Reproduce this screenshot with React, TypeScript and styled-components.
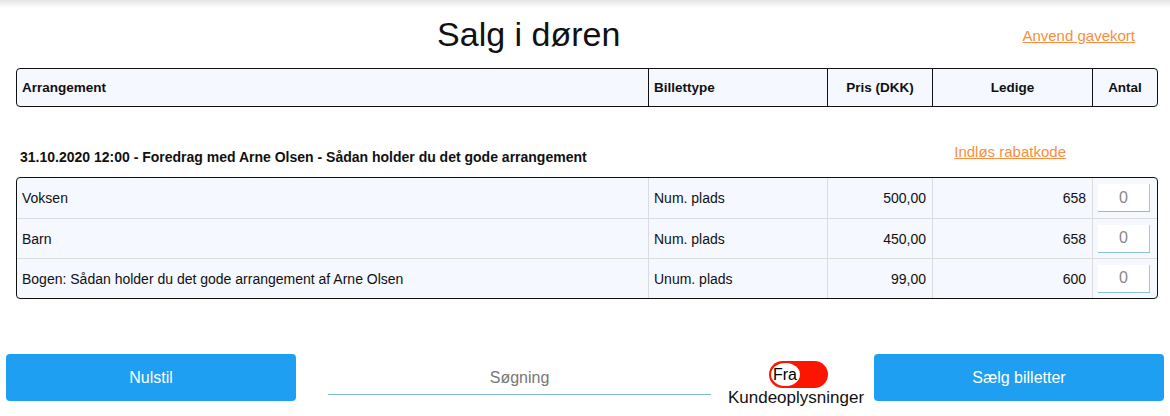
import React from 'react';
import styled, { createGlobalStyle } from 'styled-components';

const GlobalStyle = createGlobalStyle`
    html, body {
        margin: 0;
        padding: 0;
        background: #fff;
        font-family: "Liberation Sans", Arial, sans-serif;
        color: #111;
    }
`;

interface ITicket {
    name: string;
    type: string;
    price: string;
    free: string;
}

const tickets: ITicket[] = [
    { name: 'Voksen', type: 'Num. plads', price: '500,00', free: '658' },
    { name: 'Barn', type: 'Num. plads', price: '450,00', free: '658' },
    { name: 'Bogen: Sådan holder du det gode arrangement af Arne Olsen', type: 'Unum. plads', price: '99,00', free: '600' }
];

const COLUMNS = '631px 179px 105px 160px 1fr';

export default function App(): React.ReactElement {
    return (
        <>
            <GlobalStyle/>
            <Page>
                <TopShade/>
                <TitleRow>
                    <Title>Salg i døren</Title>
                    <OrangeLink href="#">Anvend gavekort</OrangeLink>
                </TitleRow>
                <HeaderTable>
                    <HeadCell>Arrangement</HeadCell>
                    <HeadCell>Billettype</HeadCell>
                    <HeadCell center>Pris (DKK)</HeadCell>
                    <HeadCell center>Ledige</HeadCell>
                    <HeadCell center>Antal</HeadCell>
                </HeaderTable>
                <EventRow>
                    <EventTitle>31.10.2020 12:00 - Foredrag med Arne Olsen - Sådan holder du det gode arrangement</EventTitle>
                    <DiscountLink href="#">Indløs rabatkode</DiscountLink>
                </EventRow>
                <BodyTable>
                    {tickets.map((t, i) => (
                        <BodyRow key={t.name} first={i === 0}>
                            <Cell>{t.name}</Cell>
                            <Cell>{t.type}</Cell>
                            <Cell right>{t.price}</Cell>
                            <Cell right>{t.free}</Cell>
                            <Cell>
                                <AmountInput defaultValue="0"/>
                            </Cell>
                        </BodyRow>
                    ))}
                </BodyTable>
                <BottomBar>
                    <BlueButton>Nulstil</BlueButton>
                    <SearchInput placeholder="Søgning"/>
                    <ToggleGroup>
                        <TogglePill>
                            <ToggleKnob>Fra</ToggleKnob>
                        </TogglePill>
                        <ToggleLabel>Kundeoplysninger</ToggleLabel>
                    </ToggleGroup>
                    <BlueButton>Sælg billetter</BlueButton>
                </BottomBar>
            </Page>
        </>
    );
}

const Page = styled.div`
    width: 1170px;
    height: 416px;
    overflow: hidden;
`;

const TopShade = styled.div`
    height: 8px;
    background: linear-gradient(#e4e4e4, #ffffff);
`;

const TitleRow = styled.div`
    display: flex;
    align-items: flex-start;
    height: 60px;
    padding: 7px 35px 0 16px;
    box-sizing: border-box;
`;

const Title = styled.h1`
    flex: 1;
    margin: 0 0 0 19px;
    font-size: 34px;
    line-height: 39px;
    font-weight: normal;
    text-align: center;
`;

const OrangeLink = styled.a`
    color: #f98e3e;
    font-size: 15px;
    line-height: 17px;
    text-decoration: underline;
    white-space: nowrap;
    margin: 12px 0 0 0;
`;

const HeaderTable = styled.div`
    display: grid;
    grid-template-columns: ${COLUMNS};
    margin: 0 12px 0 16px;
    height: 37px;
    border: 1px solid #111;
    border-radius: 4px;
    background: #f5f8fe;
    overflow: hidden;
`;

const HeadCell = styled.div<{ center?: boolean }>`
    display: flex;
    align-items: center;
    justify-content: ${p => (p.center ? 'center' : 'flex-start')};
    padding: 0 5px;
    font-size: 13.5px;
    font-weight: bold;
    & + & {
        border-left: 1px solid #111;
    }
`;

const EventRow = styled.div`
    display: flex;
    align-items: flex-end;
    height: 70px;
    padding: 0 104px 12px 20px;
    box-sizing: border-box;
`;

const EventTitle = styled.div`
    flex: 1;
    font-size: 14px;
    line-height: 16px;
    font-weight: bold;
`;

const DiscountLink = styled(OrangeLink)`
    margin: 0 0 5px 0;
`;

const BodyTable = styled.div`
    margin: 0 12px 0 16px;
    border: 1px solid #111;
    border-radius: 4px;
    background: #f5f8fe;
    overflow: hidden;
`;

const BodyRow = styled.div<{ first?: boolean }>`
    display: grid;
    grid-template-columns: ${COLUMNS};
    height: 40px;
    box-sizing: border-box;
    border-top: ${p => (p.first ? 'none' : '1px solid #dcdcdc')};
`;

const Cell = styled.div<{ right?: boolean }>`
    display: flex;
    align-items: center;
    justify-content: ${p => (p.right ? 'flex-end' : 'flex-start')};
    padding: 0 6px 0 5px;
    font-size: 14px;
    & + & {
        border-left: 1px solid #dcdcdc;
    }
`;

const AmountInput = styled.input`
    width: 52px;
    height: 28px;
    box-sizing: border-box;
    border: none;
    border-right: 1px solid #9fc6e4;
    border-bottom: 1px solid #8dbbe0;
    background: #fff;
    color: #888;
    font-family: "Liberation Sans", Arial, sans-serif;
    font-size: 16px;
    text-align: center;
    outline: none;
`;

const BottomBar = styled.div`
    display: flex;
    align-items: flex-start;
    margin-top: 55px;
    padding: 0 6px;
    gap: 32px;
`;

const BlueButton = styled.button`
    width: 290px;
    height: 47px;
    border: none;
    border-radius: 4px;
    background: #1e9ff2;
    color: #fff;
    font-family: "Liberation Sans", Arial, sans-serif;
    font-size: 16px;
`;

const SearchInput = styled.input`
    width: 383px;
    height: 41px;
    box-sizing: border-box;
    padding: 7px 0 0;
    border: none;
    border-bottom: 1px solid #80b6e2;
    background: transparent;
    font-family: "Liberation Sans", Arial, sans-serif;
    font-size: 16px;
    text-align: center;
    outline: none;
    &::placeholder {
        color: #777;
    }
`;

const ToggleGroup = styled.div`
    flex: 1;
    display: flex;
    flex-direction: column;
    align-items: center;
    padding-top: 7px;
    margin: 0 -32px 0 -25px;
`;

const TogglePill = styled.div`
    width: 59px;
    height: 27px;
    border-radius: 14px;
    background: #fc1500;
    display: flex;
    align-items: center;
    padding: 0 2px;
    box-sizing: border-box;
    margin-left: 4px;
`;

const ToggleKnob = styled.div`
    width: 29px;
    height: 23px;
    border-radius: 50%;
    background: #fff;
    display: flex;
    align-items: center;
    justify-content: center;
    font-size: 16px;
    color: #000;
`;

const ToggleLabel = styled.div`
    font-size: 17px;
    line-height: 19px;
    margin-top: 0;
`;
